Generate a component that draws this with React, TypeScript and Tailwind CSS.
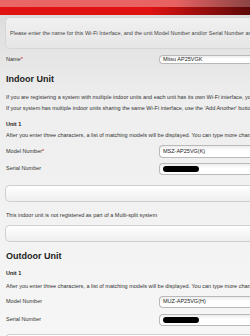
const font = { fontFamily: '"Liberation Sans", Arial, sans-serif' };

function Field({ label, required, value, redacted, className }: { label: string; required?: boolean; value?: string; redacted?: boolean; className: string }) {
  return (
    <div className={`flex items-center ${className}`}>
      <div className="w-[159px] shrink-0 pl-[6px] text-[5.5px] text-[#333]">
        {label}
        {required && <span className="text-[#d40000]">*</span>}
      </div>
      <div className="flex h-full flex-1 items-center rounded-l-[4px] border border-r-0 border-[#b9b9b9] bg-gradient-to-b from-[#ececec] to-white to-40% pl-[3px] text-[5.5px] text-[#222]">
        {redacted ? <span className="h-[6px] w-[36px] rounded-full bg-black blur-[0.4px]" /> : value}
      </div>
    </div>
  );
}

function Panel({ className }: { className: string }) {
  return <div className={`ml-[5px] h-[17px] rounded-l-[5px] border border-r-0 border-[#cfcfcf] bg-gradient-to-b from-white to-[#eeeeee] ${className}`} />;
}

export default function App() {
  return (
    <div className="h-[336px] w-[250px] overflow-hidden bg-gradient-to-b from-[#dadada] via-[#eeeeee] via-30% to-[#f6f6f6]" style={font}>
      {/* top bar */}
      <div className="flex h-[15px] flex-col">
        <div className="h-[7px] bg-gradient-to-r from-[#ea6767] via-[#e86262] via-70% to-[#8c4444]" />
        <div className="h-[8px] bg-gradient-to-r from-[#e01212] via-[#df1111] via-60% to-[#5e0808]" />
      </div>

      {/* intro */}
      <div className="ml-[5px] mt-[2px] flex h-[32px] items-center whitespace-nowrap rounded-l-[5px] border border-r-0 border-[#d6d6d6] bg-gradient-to-b from-[#f0f0f0] to-[#e6e6e6] pl-[4px] text-[5.5px] text-[#444]">
        Please enter the name for this Wi-Fi Interface, and the unit Model Number and/or Serial Number and
      </div>

      <Field label="Name" required value="Mitsu AP25VGK" className="mt-[6px] h-[9px]" />

      <h2 className="ml-[6px] mt-[11px] h-[9px] text-[9px] font-bold leading-[9px] text-[#222]">Indoor Unit</h2>
      <p className="ml-[6px] mt-[10px] h-[6px] whitespace-nowrap text-[5.5px] leading-[6px] text-[#333]">
        If you are registering a system with multiple indoor units and each unit has its own Wi-Fi interface, you
      </p>
      <p className="ml-[6px] mt-[4.5px] h-[6px] whitespace-nowrap text-[5.5px] leading-[6px] text-[#333]">
        If your system has multiple indoor units sharing the same Wi-Fi interface, use the 'Add Another' button
      </p>
      <div className="ml-[6px] mt-[10px] h-[6px] text-[5.5px] font-bold leading-[6px] text-[#222]">Unit 1</div>
      <p className="ml-[6px] mt-[5px] h-[6px] whitespace-nowrap text-[5.5px] leading-[6px] text-[#333]">
        After you enter three characters, a list of matching models will be displayed. You can type more characters
      </p>
      <Field label="Model Number" required value="MSZ-AP25VG(K)" className="mt-[7px] h-[13px]" />
      <Field label="Serial Number" redacted className="mt-[5px] h-[12px]" />

      <Panel className="mt-[10px]" />
      <p className="ml-[6px] mt-[10px] h-[6px] whitespace-nowrap text-[5.5px] leading-[6px] text-[#333]">
        This indoor unit is not registered as part of a Multi-split system
      </p>
      <Panel className="mt-[7px]" />

      <h2 className="ml-[6px] mt-[10.5px] h-[9px] text-[9px] font-bold leading-[9px] text-[#222]">Outdoor Unit</h2>
      <div className="ml-[6px] mt-[8.5px] h-[6px] text-[5.5px] font-bold leading-[6px] text-[#222]">Unit 1</div>
      <p className="ml-[6px] mt-[7px] h-[6px] whitespace-nowrap text-[5.5px] leading-[6px] text-[#333]">
        After you enter three characters, a list of matching models will be displayed. You can type more characters
      </p>
      <Field label="Model Number" value="MUZ-AP25VG(H)" className="mt-[7px] h-[12px]" />
      <Field label="Serial Number" redacted className="mt-[6px] h-[12px]" />
      <Panel className="mt-[8px]" />
    </div>
  );
}
